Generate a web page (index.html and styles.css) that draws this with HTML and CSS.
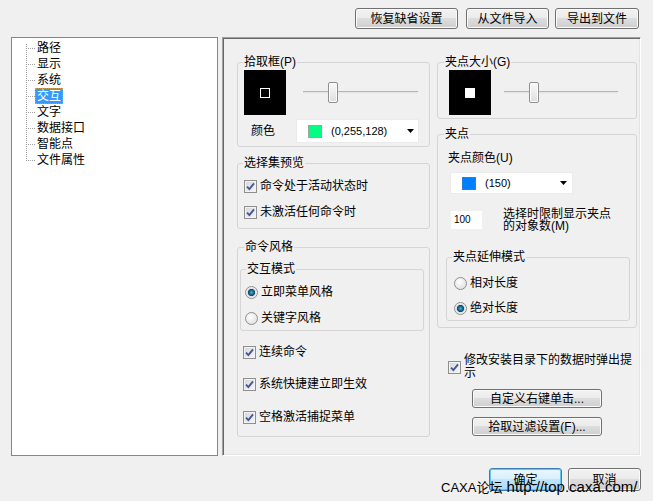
FILE: index.html
```html
<!DOCTYPE html>
<html lang="zh-CN">

<head>
    <meta charset="UTF-8">
    <title>选项 - 交互</title>
    <link rel="stylesheet" href="styles.css">
</head>

<body>
    <div class="dialog">
        <!-- top actions -->
        <div class="toolbar">
            <button class="btn btn-reset">恢复缺省设置</button>
            <button class="btn btn-import">从文件导入</button>
            <button class="btn btn-export">导出到文件</button>
        </div>

        <div class="main">
            <!-- category tree -->
            <ul class="tree">
                <li class="tree-item first"><span class="branch"></span><span class="tree-label">路径</span></li>
                <li class="tree-item"><span class="branch"></span><span class="tree-label">显示</span></li>
                <li class="tree-item"><span class="branch"></span><span class="tree-label">系统</span></li>
                <li class="tree-item"><span class="branch"></span><span class="tree-label selected">交互</span></li>
                <li class="tree-item"><span class="branch"></span><span class="tree-label">文字</span></li>
                <li class="tree-item"><span class="branch"></span><span class="tree-label">数据接口</span></li>
                <li class="tree-item"><span class="branch"></span><span class="tree-label">智能点</span></li>
                <li class="tree-item last"><span class="branch"></span><span class="tree-label">文件属性</span></li>
            </ul>

            <!-- settings page -->
            <div class="panel">
                <div class="col col-left">
                    <fieldset class="group group-pick">
                        <legend>拾取框(P)</legend>
                        <div class="preview-row">
                            <div class="preview"><span class="mark-outline"></span></div>
                            <div class="slider slider-pick">
                                <span class="track track-before"></span><span class="thumb"></span><span class="track track-after"></span>
                            </div>
                        </div>
                        <div class="color-row">
                            <span class="color-label">颜色</span>
                            <div class="combo combo-pick">
                                <span class="swatch swatch-green"></span>
                                <span class="combo-text">(0,255,128)</span>
                                <svg class="combo-arrow" viewBox="0 0 7 4"><path d="M0 0h7L3.5 4z" /></svg>
                            </div>
                        </div>
                    </fieldset>

                    <fieldset class="group group-preview">
                        <legend>选择集预览</legend>
                        <label class="check-row row-active">
                            <span class="cb"><svg viewBox="0 0 9 9"><path d="M1 4.6l2.4 2.5L8 1.3" /></svg></span>
                            <span>命令处于活动状态时</span>
                        </label>
                        <label class="check-row row-idle">
                            <span class="cb"><svg viewBox="0 0 9 9"><path d="M1 4.6l2.4 2.5L8 1.3" /></svg></span>
                            <span>未激活任何命令时</span>
                        </label>
                    </fieldset>

                    <fieldset class="group group-command">
                        <legend>命令风格</legend>
                        <fieldset class="group subgroup-mode">
                            <legend>交互模式</legend>
                            <label class="radio-row row-menu"><span class="rb on"></span><span>立即菜单风格</span></label>
                            <label class="radio-row row-keyword"><span class="rb"></span><span>关键字风格</span></label>
                        </fieldset>
                        <label class="check-row row-repeat">
                            <span class="cb"><svg viewBox="0 0 9 9"><path d="M1 4.6l2.4 2.5L8 1.3" /></svg></span>
                            <span>连续命令</span>
                        </label>
                        <label class="check-row row-hotkey">
                            <span class="cb"><svg viewBox="0 0 9 9"><path d="M1 4.6l2.4 2.5L8 1.3" /></svg></span>
                            <span>系统快捷建立即生效</span>
                        </label>
                        <label class="check-row row-space">
                            <span class="cb"><svg viewBox="0 0 9 9"><path d="M1 4.6l2.4 2.5L8 1.3" /></svg></span>
                            <span>空格激活捕捉菜单</span>
                        </label>
                    </fieldset>
                </div>

                <div class="col col-right">
                    <fieldset class="group group-size">
                        <legend>夹点大小(G)</legend>
                        <div class="preview-row">
                            <div class="preview"><span class="mark-fill"></span></div>
                            <div class="slider slider-size">
                                <span class="track track-before"></span><span class="thumb"></span><span class="track track-after"></span>
                            </div>
                        </div>
                    </fieldset>

                    <fieldset class="group group-grip">
                        <legend>夹点</legend>
                        <div class="grip-color-label">夹点颜色(U)</div>
                        <div class="combo combo-grip">
                            <span class="swatch swatch-blue"></span>
                            <span class="combo-text">(150)</span>
                            <svg class="combo-arrow" viewBox="0 0 7 4"><path d="M0 0h7L3.5 4z" /></svg>
                        </div>
                        <div class="limit-row">
                            <span class="edit">100</span>
                            <span class="limit-label">选择时限制显示夹点的对象数(M)</span>
                        </div>
                        <fieldset class="group subgroup-stretch">
                            <legend>夹点延伸模式</legend>
                            <label class="radio-row row-relative"><span class="rb"></span><span>相对长度</span></label>
                            <label class="radio-row row-absolute"><span class="rb on"></span><span>绝对长度</span></label>
                        </fieldset>
                    </fieldset>

                    <label class="check-row row-notify">
                        <span class="cb"><svg viewBox="0 0 9 9"><path d="M1 4.6l2.4 2.5L8 1.3" /></svg></span>
                        <span class="notify-text">修改安装目录下的数据时弹出提示</span>
                    </label>
                    <button class="btn btn-wide btn-rightclick">自定义右键单击...</button>
                    <button class="btn btn-wide btn-filter">拾取过滤设置(F)...</button>
                </div>
            </div>
        </div>

        <div class="footer">
            <button class="btn btn-ok">确定</button>
            <button class="btn btn-cancel">取消</button>
        </div>

        <div class="watermark"><span class="wm-site">CAXA论坛</span> http://top.caxa.com/</div>
    </div>
</body>

</html>
```

FILE: styles.css
```css
html,
body {
    margin: 0;
    padding: 0;
    background: #f0f0f0;
    font-family: "Liberation Sans", "Noto Sans CJK SC", sans-serif;
    font-size: 12px;
    color: #000;
}

.dialog {
    width: 653px;
    height: 501px;
    position: relative;
    overflow: hidden;
}

/* buttons */
.btn {
    box-sizing: border-box;
    height: 21px;
    padding: 0;
    border: 1px solid #707070;
    border-radius: 3px;
    background: linear-gradient(#f2f2f2 0%, #ebebeb 50%, #dddddd 50%, #cfcfcf 100%);
    box-shadow: inset 0 0 0 1px #fbfbfb;
    font-family: inherit;
    font-size: 12px;
    line-height: 14px;
    color: #000;
}

.toolbar {
    display: flex;
    justify-content: flex-end;
    padding: 8px 14px 0 0;
}

.btn-reset {
    width: 103px;
}

.btn-import {
    width: 83px;
    margin-left: 8px;
}

.btn-export {
    width: 84px;
    margin-left: 6px;
}

.main {
    display: flex;
    gap: 4px;
    margin: 8px 0 0 11px;
}

/* tree */
.tree {
    box-sizing: border-box;
    width: 207px;
    height: 419px;
    margin: 0;
    padding: 2px 0 0 14px;
    list-style: none;
    background: #fff;
    border: 1px solid #828790;
}

.tree-item {
    display: flex;
    height: 16px;
}

.branch {
    flex: none;
    width: 9px;
    background:
        repeating-linear-gradient(90deg, #a0a0a0 0 1px, transparent 1px 2px) left 8px / 100% 1px no-repeat,
        repeating-linear-gradient(180deg, #a0a0a0 0 1px, transparent 1px 2px) left top / 1px 100% no-repeat;
}

.tree-item.first .branch {
    background:
        repeating-linear-gradient(90deg, #a0a0a0 0 1px, transparent 1px 2px) left 8px / 100% 1px no-repeat,
        repeating-linear-gradient(180deg, #a0a0a0 0 1px, transparent 1px 2px) left 4px / 1px 12px no-repeat;
}

.tree-item.last .branch {
    background:
        repeating-linear-gradient(90deg, #a0a0a0 0 1px, transparent 1px 2px) left 8px / 100% 1px no-repeat,
        repeating-linear-gradient(180deg, #a0a0a0 0 1px, transparent 1px 2px) left top / 1px 9px no-repeat;
}

.tree-label {
    align-self: center;
    padding: 0 1px;
    border: 1px solid transparent;
    line-height: 14px;
}

.tree-label.selected {
    background: #3399ff;
    color: #fff;
    border: 1px dotted #c9a14c;
}

/* right page */
.panel {
    box-sizing: border-box;
    display: flex;
    gap: 7px;
    width: 419px;
    height: 419px;
    padding: 17px 0 0 14px;
    border: 1px solid;
    border-color: #a0a0a0 #ffffff #ffffff #a0a0a0;
    box-shadow: inset 1px 1px 0 #696969, inset -1px -1px 0 #e3e3e3;
}

.col {
    display: flex;
    flex-direction: column;
}

.col-left {
    width: 193px;
}

.col-right {
    width: 200px;
}

.group {
    min-width: 0;
    margin: 0;
    padding: 0;
    border: 1px solid #d5d5d5;
    border-radius: 3px;
}

.group legend {
    padding: 0 1px;
    line-height: 14px;
}

.group-pick {
    padding: 0 0 3px 6px;
}

.group-pick legend,
.group-preview legend {
    margin-left: -1px;
}

.preview-row {
    display: flex;
    align-items: center;
    height: 45px;
    margin-top: 1px;
}

.preview {
    flex: none;
    width: 42px;
    height: 45px;
    background: #000;
    display: flex;
    align-items: center;
    justify-content: center;
}

.mark-outline {
    box-sizing: border-box;
    width: 10px;
    height: 10px;
    border: 1px solid #fff;
}

.mark-fill {
    width: 10px;
    height: 10px;
    background: #fff;
}

.slider {
    display: flex;
    align-items: center;
    height: 21px;
}

.slider-pick {
    width: 115px;
    margin-left: 17px;
}

.slider-size {
    width: 114px;
    margin-left: 13px;
}

.track {
    height: 1px;
    background: #e4e4e4;
    border-top: 1px solid #b4b4b4;
    border-bottom: 1px solid #ececec;
}

.track-before {
    width: 25px;
}

.track-after {
    flex: 1;
}

.thumb {
    box-sizing: border-box;
    flex: none;
    width: 10px;
    height: 21px;
    border: 1px solid #8e8f8f;
    border-radius: 2px;
    background: linear-gradient(#fafafa, #dedede);
    box-shadow: inset 0 0 0 1px #fdfdfd;
}

.color-row {
    display: flex;
    align-items: center;
    height: 24px;
    margin-top: 4px;
}

.color-label {
    margin-left: 7px;
    line-height: 14px;
}

.combo {
    box-sizing: border-box;
    display: flex;
    align-items: center;
    background: #fff;
    border: 1px solid #ebebeb;
    font-size: 11px;
}

.combo-pick {
    width: 123px;
    height: 24px;
    margin-left: 21px;
    padding: 0 4px 0 11px;
}

.combo-grip {
    width: 123px;
    height: 22px;
    margin: 7px 0 0 1px;
    padding: 0 5px 0 11px;
}

.swatch {
    box-sizing: border-box;
    flex: none;
    width: 14px;
    height: 13px;
    border: 1px solid #9aa4a0;
}

.swatch-green {
    background: #00ff80;
}

.swatch-blue {
    background: #007fff;
    border-color: #2b7fd8;
}

.combo-text {
    margin-left: 9px;
}

.combo-arrow {
    width: 7px;
    height: 4px;
    margin-left: auto;
    fill: #000;
}

/* checkboxes and radios */
.check-row,
.radio-row {
    display: flex;
    align-items: center;
    height: 16px;
    line-height: 14px;
}

.cb {
    box-sizing: border-box;
    flex: none;
    width: 13px;
    height: 13px;
    margin-right: 3px;
    border: 1px solid #8f8f8f;
    background: linear-gradient(135deg, #d6d6d6, #f7f7f7);
    box-shadow: inset 0 0 0 1px #f2f2f2;
    display: flex;
    align-items: center;
    justify-content: center;
}

.cb svg {
    width: 9px;
    height: 9px;
    fill: none;
    stroke: #41589a;
    stroke-width: 1.9;
}

.rb {
    box-sizing: border-box;
    flex: none;
    width: 13px;
    height: 13px;
    margin-right: 3px;
    border: 1px solid #8f8f8f;
    border-radius: 50%;
    background: radial-gradient(circle at 40% 35%, #ffffff, #d9d9d9);
}

.rb.on {
    background: radial-gradient(circle at 50% 50%, #5fb6de 0, #1f78a6 1.5px, #0e4a6a 3.3px, #dcdcdc 3.9px, #fafafa 6px);
}

.group-preview {
    margin-top: 9px;
    padding: 0 0 8px 6px;
}

.row-active {
    margin-top: 8px;
}

.row-idle {
    margin-top: 10px;
}

.group-command {
    margin-top: 11px;
    padding: 0 5px 11px 2px;
}

.group-command > legend {
    margin-left: 4px;
}

.subgroup-mode {
    margin-top: 8px;
    padding: 0 0 4px 4px;
}

.subgroup-mode legend {
    margin-left: 1px;
}

.row-menu {
    margin-top: 8px;
}

.row-keyword {
    margin-top: 10px;
}

.row-repeat {
    margin: 13px 0 0 3px;
}

.row-hotkey {
    margin: 16px 0 0 3px;
}

.row-space {
    margin: 17px 0 0 3px;
}

/* right column */
.group-size {
    padding: 0 0 3px 11px;
}

.group-size legend,
.group-grip > legend {
    margin-left: -5px;
}

.group-grip {
    margin-top: 8px;
    padding: 0 6px 6px 11px;
}

.grip-color-label {
    margin: 10px 0 0 -1px;
    line-height: 14px;
}

.limit-row {
    display: flex;
    align-items: center;
    height: 24px;
    margin: 14px 0 0 2px;
}

.edit {
    box-sizing: border-box;
    flex: none;
    width: 31px;
    height: 18px;
    padding-left: 3px;
    background: #fff;
    font-size: 10px;
    line-height: 18px;
}

.limit-label {
    width: 110px;
    margin-left: 21px;
    line-height: 12px;
}

.subgroup-stretch {
    margin: 18px 0 0 -3px;
    padding: 0 0 4px 7px;
}

.subgroup-stretch legend {
    margin-left: -2px;
}

.row-relative {
    margin-top: 11px;
}

.row-absolute {
    margin-top: 9px;
}

.row-notify {
    height: 26px;
    margin: 26px 0 0 11px;
}

.notify-text {
    width: 170px;
    line-height: 13px;
}

.btn-wide {
    align-self: center;
    width: 130px;
    height: 19px;
    margin-top: 9px;
}

.btn-filter {
    margin-top: 9px;
}

.footer {
    display: flex;
    justify-content: flex-end;
    gap: 6px;
    margin-top: 12px;
    padding-right: 12px;
}

.btn-ok,
.btn-cancel {
    width: 73px;
    height: 23px;
}

.btn-ok {
    border-color: #3c7fb1;
    background: linear-gradient(#eaf6fd 0%, #d9f0fc 50%, #bee6fd 50%, #a7d9f5 100%);
    box-shadow: inset 0 0 0 1px #62c4f0;
}

.watermark {
    position: absolute;
    left: 441px;
    top: 479px;
    font-size: 15px;
    line-height: 15px;
    white-space: nowrap;
    color: #000;
}

.wm-site {
    font-size: 13px;
}
```
